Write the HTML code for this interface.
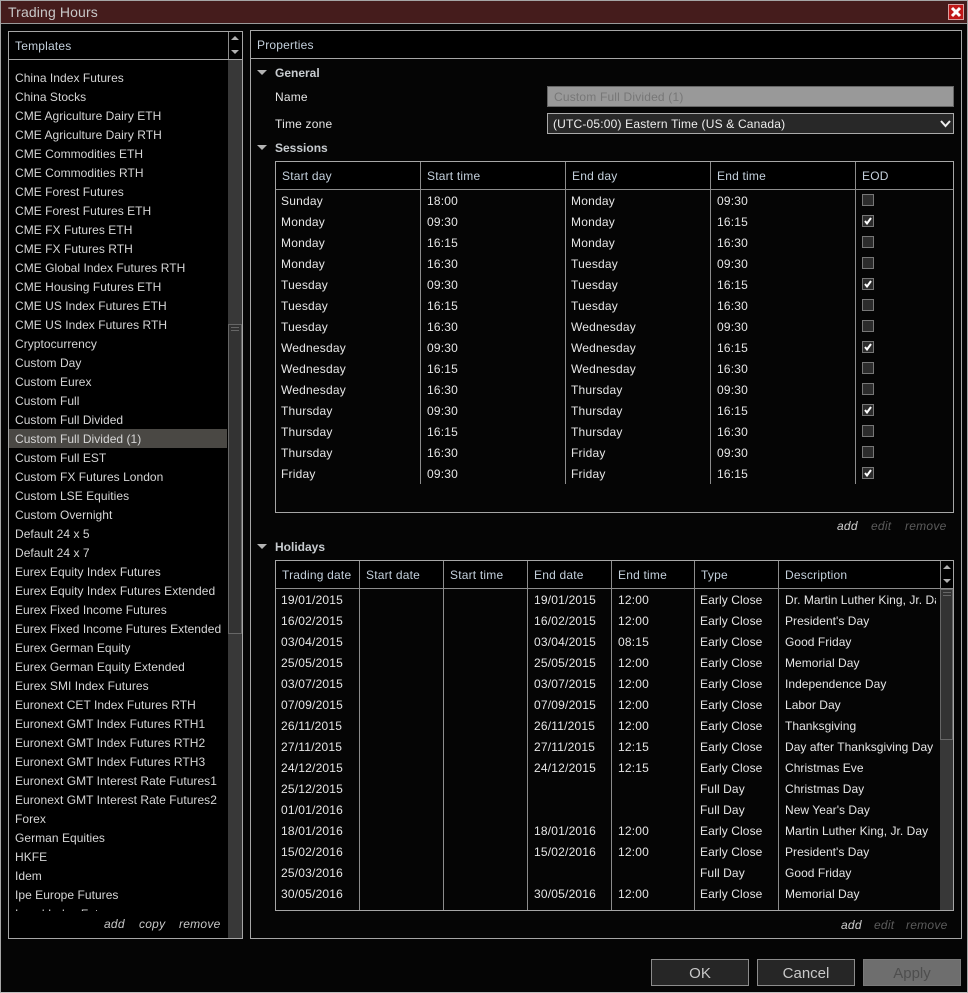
<!DOCTYPE html>
<html><head><meta charset="utf-8"><title>Trading Hours</title>
<style>
html,body{margin:0;padding:0;background:#050505}
body{width:968px;height:993px;position:relative;overflow:hidden;font:12px/19px "Liberation Sans",Arial,sans-serif;color:#dcdcdc}
div{position:absolute;box-sizing:border-box;white-space:pre}
.b{border:1px solid #a6a6a6}
.v{width:1px;background:#8c8c8c}
.h{height:1px;background:#a6a6a6}
.col{line-height:21px;color:#e6e6e6;letter-spacing:.2px}
.hd{color:#c4d0dc;line-height:20px;letter-spacing:.2px}
.lnk{font-style:italic;line-height:16px;color:#c8c8c8;letter-spacing:.25px}
.dim{color:#5c5c5c}
.sec{font-weight:bold;color:#c8ccd0;line-height:16px}
.tri{width:0;height:0;border-left:5px solid transparent;border-right:5px solid transparent;border-top:5px solid #b4b4b4}
.btn{border:1px solid #8c8c8c;background:#262626;color:#c8c8c8;text-align:center;font-size:15px;line-height:27px}
.up{width:0;height:0;border-left:4px solid transparent;border-right:4px solid transparent;border-bottom:4px solid #b0b0b0}
.dn{width:0;height:0;border-left:4px solid transparent;border-right:4px solid transparent;border-top:4px solid #b0b0b0}
.cb{left:862px;width:12px;height:12px;border:1px solid #777;background:#2c2c2c}
.cb svg{position:absolute;left:0;top:0}
</style></head><body>
<div style="left:0;top:0;width:968px;height:993px;border:1px solid #a6a6a6;border-bottom-color:#c0c0c0"></div>
<div style="left:1px;top:1px;width:966px;height:22px;background:#451c1c"></div>
<div class="h" style="left:1px;top:23px;width:966px;background:#9a9a9a"></div>
<div style="left:8px;top:3px;font-size:14px;line-height:18px;color:#c8c8c8;letter-spacing:.13px">Trading Hours</div>
<div style="left:948px;top:4px;width:16px;height:16px;background:#c01818;border:1px solid #d8a0a0">
<svg width="14" height="14" style="position:absolute;left:0;top:0"><path d="M3 3L11 11M11 3L3 11" stroke="#fff" stroke-width="3" fill="none"/></svg></div>

<!-- Templates -->
<div class="b" style="left:8px;top:31px;width:235px;height:908px;background:#000"></div>
<div class="h" style="left:9px;top:59px;width:233px"></div>
<div class="v" style="left:228px;top:32px;height:27px"></div>
<div class="hd" style="left:15px;top:36px">Templates</div>
<div class="up" style="left:231px;top:36px"></div>
<div class="dn" style="left:231px;top:50px"></div>
<div style="left:228px;top:60px;width:14px;height:878px;background:#383838"></div>
<div style="left:228px;top:324px;width:14px;height:310px;background:#333;border:1px solid #666"></div>
<div class="h" style="left:231px;top:327px;width:8px;background:#666"></div>
<div class="h" style="left:231px;top:330px;width:8px;background:#666"></div>
<div style="left:9px;top:429px;width:218px;height:19px;background:#4a4844"></div>
<div style="left:15px;top:69px;width:212px;height:842px;overflow:hidden;line-height:19px;color:#d6d6d6;letter-spacing:.04px">China Index Futures
China Stocks
CME Agriculture Dairy ETH
CME Agriculture Dairy RTH
CME Commodities ETH
CME Commodities RTH
CME Forest Futures
CME Forest Futures ETH
CME FX Futures ETH
CME FX Futures RTH
CME Global Index Futures RTH
CME Housing Futures ETH
CME US Index Futures ETH
CME US Index Futures RTH
Cryptocurrency
Custom Day
Custom Eurex
Custom Full
Custom Full Divided
Custom Full Divided (1)
Custom Full EST
Custom FX Futures London
Custom LSE Equities
Custom Overnight
Default 24 x 5
Default 24 x 7
Eurex Equity Index Futures
Eurex Equity Index Futures Extended
Eurex Fixed Income Futures
Eurex Fixed Income Futures Extended
Eurex German Equity
Eurex German Equity Extended
Eurex SMI Index Futures
Euronext CET Index Futures RTH
Euronext GMT Index Futures RTH1
Euronext GMT Index Futures RTH2
Euronext GMT Index Futures RTH3
Euronext GMT Interest Rate Futures1
Euronext GMT Interest Rate Futures2
Forex
German Equities
HKFE
Idem
Ipe Europe Futures
Israel Index Futures</div>
<div class="lnk" style="left:104px;top:916px">add</div>
<div class="lnk" style="left:139px;top:916px">copy</div>
<div class="lnk" style="left:179px;top:916px">remove</div>

<!-- Properties -->
<div class="b" style="left:250px;top:30px;width:712px;height:909px;background:#050505"></div>
<div style="left:251px;top:31px;width:710px;height:27px;background:#000"></div>
<div class="h" style="left:251px;top:58px;width:710px"></div>
<div class="hd" style="left:257px;top:35px">Properties</div>
<div class="tri" style="left:257px;top:70px"></div>
<div class="sec" style="left:275px;top:65px">General</div>
<div class="col" style="left:275px;top:87px">Name</div>
<div class="col" style="left:275px;top:114px">Time zone</div>
<div style="left:547px;top:86px;width:407px;height:21px;background:#999;border:1px solid #666;color:#777;padding-left:6px;line-height:21px;letter-spacing:.18px">Custom Full Divided (1)</div>
<div style="left:547px;top:113px;width:407px;height:21px;background:#282828;border:1px solid #aaa;color:#eee;padding-left:5px;line-height:21px;letter-spacing:.18px">(UTC-05:00) Eastern Time (US &amp; Canada)</div>
<svg width="12" height="8" style="position:absolute;left:940px;top:120px"><path d="M1 1L5.500 6L10 1" stroke="#eee" stroke-width="2" fill="none"/></svg>

<div class="tri" style="left:257px;top:145px"></div>
<div class="sec" style="left:275px;top:140px">Sessions</div>
<div class="b" style="left:275px;top:161px;width:679px;height:352px;background:#050505"></div>
<div style="left:276px;top:162px;width:677px;height:27px;background:#000"></div>
<div class="h" style="left:276px;top:189px;width:677px;background:#8c8c8c"></div>
<div class="v" style="left:420px;top:162px;height:322px"></div>
<div class="v" style="left:565px;top:162px;height:322px"></div>
<div class="v" style="left:710px;top:162px;height:322px"></div>
<div class="v" style="left:855px;top:162px;height:322px"></div>
<div class="hd" style="left:282px;top:166px">Start day</div>
<div class="hd" style="left:427px;top:166px">Start time</div>
<div class="hd" style="left:572px;top:166px">End day</div>
<div class="hd" style="left:717px;top:166px">End time</div>
<div class="hd" style="left:862px;top:166px">EOD</div>
<div class="col" style="left:281px;top:191px">Sunday
Monday
Monday
Monday
Tuesday
Tuesday
Tuesday
Wednesday
Wednesday
Wednesday
Thursday
Thursday
Thursday
Friday</div>
<div class="col" style="left:427px;top:191px">18:00
09:30
16:15
16:30
09:30
16:15
16:30
09:30
16:15
16:30
09:30
16:15
16:30
09:30</div>
<div class="col" style="left:571px;top:191px">Monday
Monday
Monday
Tuesday
Tuesday
Tuesday
Wednesday
Wednesday
Wednesday
Thursday
Thursday
Thursday
Friday
Friday</div>
<div class="col" style="left:717px;top:191px">09:30
16:15
16:30
09:30
16:15
16:30
09:30
16:15
16:30
09:30
16:15
16:30
09:30
16:15</div>
<div class="cb" style="top:194px"></div>
<div class="cb" style="top:215px"><svg width="10" height="10"><path d="M2 5L4 7.500L8 2" stroke="#fff" stroke-width="2" fill="none"/></svg></div>
<div class="cb" style="top:236px"></div>
<div class="cb" style="top:257px"></div>
<div class="cb" style="top:278px"><svg width="10" height="10"><path d="M2 5L4 7.500L8 2" stroke="#fff" stroke-width="2" fill="none"/></svg></div>
<div class="cb" style="top:299px"></div>
<div class="cb" style="top:320px"></div>
<div class="cb" style="top:341px"><svg width="10" height="10"><path d="M2 5L4 7.500L8 2" stroke="#fff" stroke-width="2" fill="none"/></svg></div>
<div class="cb" style="top:362px"></div>
<div class="cb" style="top:383px"></div>
<div class="cb" style="top:404px"><svg width="10" height="10"><path d="M2 5L4 7.500L8 2" stroke="#fff" stroke-width="2" fill="none"/></svg></div>
<div class="cb" style="top:425px"></div>
<div class="cb" style="top:446px"></div>
<div class="cb" style="top:467px"><svg width="10" height="10"><path d="M2 5L4 7.500L8 2" stroke="#fff" stroke-width="2" fill="none"/></svg></div>
<div class="lnk" style="left:837px;top:518px;color:#d0d0d0">add</div>
<div class="lnk dim" style="left:871px;top:518px">edit</div>
<div class="lnk dim" style="left:905px;top:518px">remove</div>

<div class="tri" style="left:257px;top:544px"></div>
<div class="sec" style="left:275px;top:539px">Holidays</div>
<div class="b" style="left:275px;top:560px;width:679px;height:351px;background:#050505"></div>
<div style="left:276px;top:561px;width:677px;height:27px;background:#000"></div>
<div class="h" style="left:276px;top:588px;width:677px;background:#8c8c8c"></div>
<div class="v" style="left:359px;top:561px;height:349px"></div>
<div class="v" style="left:443px;top:561px;height:349px"></div>
<div class="v" style="left:527px;top:561px;height:349px"></div>
<div class="v" style="left:611px;top:561px;height:349px"></div>
<div class="v" style="left:694px;top:561px;height:349px"></div>
<div class="v" style="left:778px;top:561px;height:349px"></div>
<div class="v" style="left:940px;top:561px;height:27px"></div>
<div class="hd" style="left:282px;top:565px">Trading date</div>
<div class="hd" style="left:366px;top:565px">Start date</div>
<div class="hd" style="left:450px;top:565px">Start time</div>
<div class="hd" style="left:534px;top:565px">End date</div>
<div class="hd" style="left:618px;top:565px">End time</div>
<div class="hd" style="left:701px;top:565px">Type</div>
<div class="hd" style="left:785px;top:565px">Description</div>
<div class="up" style="left:943px;top:565px"></div>
<div class="dn" style="left:943px;top:579px"></div>
<div style="left:940px;top:589px;width:13px;height:321px;background:#383838"></div>
<div style="left:940px;top:589px;width:13px;height:151px;background:#333;border:1px solid #666"></div>
<div class="h" style="left:943px;top:592px;width:8px;background:#666"></div>
<div class="h" style="left:943px;top:595px;width:8px;background:#666"></div>
<div class="col" style="left:281px;top:590px">19/01/2015
16/02/2015
03/04/2015
25/05/2015
03/07/2015
07/09/2015
26/11/2015
27/11/2015
24/12/2015
25/12/2015
01/01/2016
18/01/2016
15/02/2016
25/03/2016
30/05/2016</div>
<div class="col" style="left:534px;top:590px">19/01/2015
16/02/2015
03/04/2015
25/05/2015
03/07/2015
07/09/2015
26/11/2015
27/11/2015
24/12/2015


18/01/2016
15/02/2016

30/05/2016</div>
<div class="col" style="left:618px;top:590px">12:00
12:00
08:15
12:00
12:00
12:00
12:00
12:15
12:15


12:00
12:00

12:00</div>
<div class="col" style="left:700px;top:590px;letter-spacing:.1px">Early Close
Early Close
Early Close
Early Close
Early Close
Early Close
Early Close
Early Close
Early Close
Full Day
Full Day
Early Close
Early Close
Full Day
Early Close</div>
<div class="col" style="left:785px;top:590px;width:151px;overflow:hidden;letter-spacing:.04px">Dr. Martin Luther King, Jr. Day
President's Day
Good Friday
Memorial Day
Independence Day
Labor Day
Thanksgiving
Day after Thanksgiving Day
Christmas Eve
Christmas Day
New Year's Day
Martin Luther King, Jr. Day
President's Day
Good Friday
Memorial Day</div>
<div class="lnk" style="left:841px;top:917px;color:#d0d0d0">add</div>
<div class="lnk dim" style="left:874px;top:917px">edit</div>
<div class="lnk dim" style="left:906px;top:917px">remove</div>

<div class="btn" style="left:651px;top:959px;width:98px;height:27px">OK</div>
<div class="btn" style="left:757px;top:959px;width:98px;height:27px">Cancel</div>
<div class="btn" style="left:863px;top:959px;width:98px;height:27px;background:#6e6e6e;border-color:#7a7a7a;color:#4e4e4e">Apply</div>
</body></html>
